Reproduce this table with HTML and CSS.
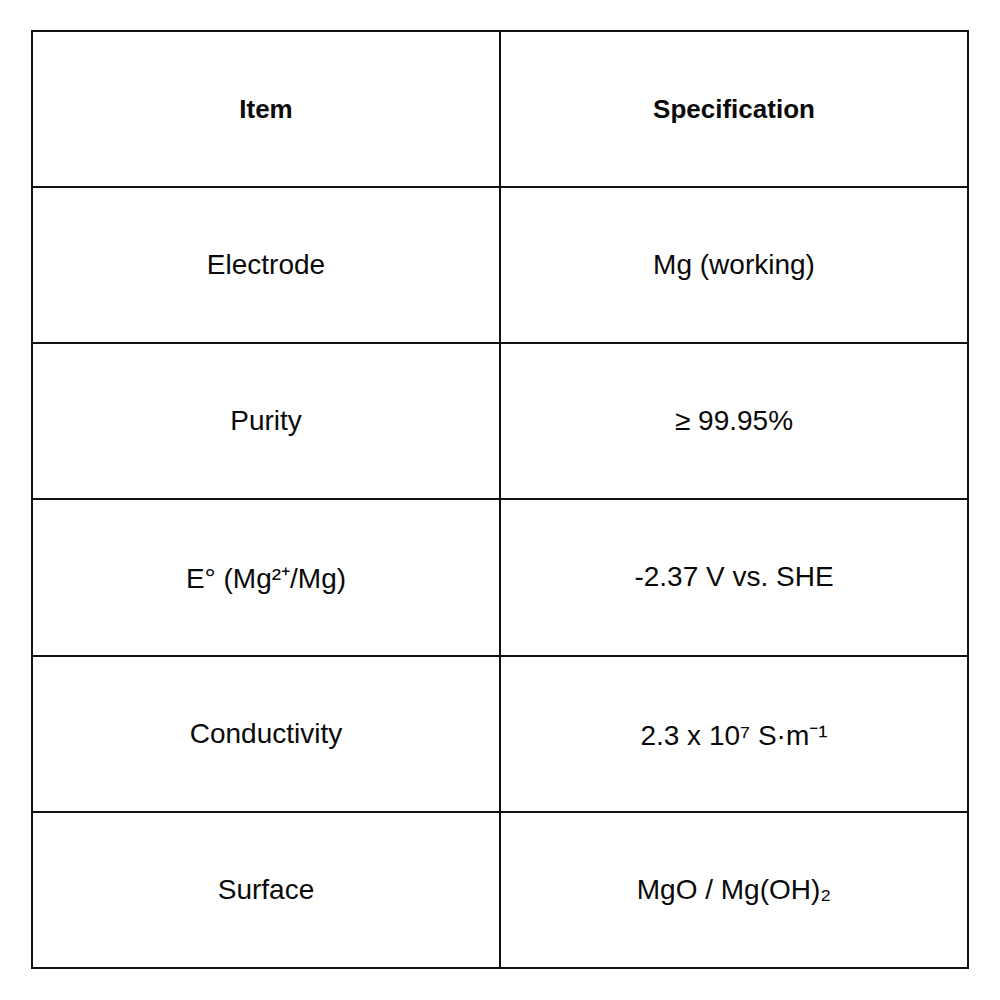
FILE: index.html
```html
<!DOCTYPE html>
<html>
<head>
<meta charset="utf-8">
<link rel="stylesheet" href="styles.css">
</head>
<body>
<div class="page">
<table class="spec">
<thead>
<tr><th>Item</th><th>Specification</th></tr>
</thead>
<tbody>
<tr><td>Electrode</td><td>Mg (working)</td></tr>
<tr><td>Purity</td><td>≥ 99.95%</td></tr>
<tr><td>E° (Mg²⁺/Mg)</td><td>-2.37 V vs. SHE</td></tr>
<tr><td>Conductivity</td><td>2.3 x 10⁷ S·m⁻¹</td></tr>
<tr><td>Surface</td><td>MgO / Mg(OH)₂</td></tr>
</tbody>
</table>
</div>
</body>
</html>
```
FILE: styles.css
```css
html, body {
  margin: 0;
  padding: 0;
  background: #fff;
}
.page {
  padding: 30px 0 0 31px;
}
.spec {
  border-collapse: collapse;
  width: 938px;
  height: 939px;
  table-layout: fixed;
  font-family: "Liberation Sans", Arial, sans-serif;
  font-size: 28px;
  color: #0a0a0a;
}
.spec th, .spec td {
  border: 2px solid #111;
  text-align: center;
  vertical-align: middle;
  height: 154px;
  padding: 0;
}
.spec th {
  font-weight: 700;
  font-size: 26px;
}
```
